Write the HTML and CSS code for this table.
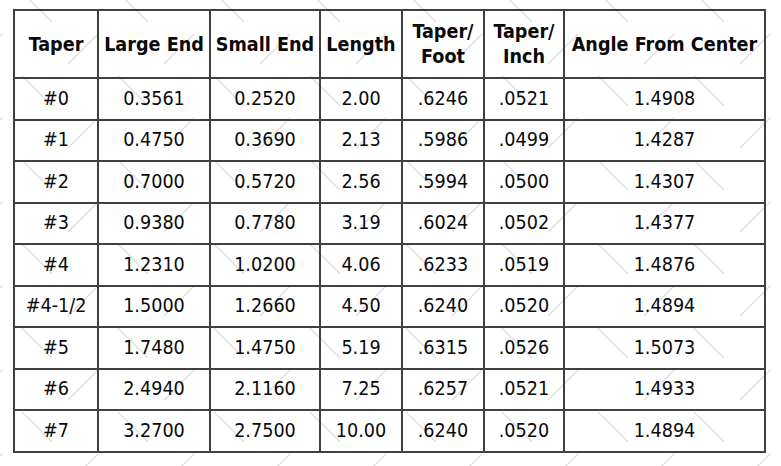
FILE: index.html
```html
<!DOCTYPE html>
<html lang="en">
<head>
<meta charset="utf-8">
<title>Morse Taper Dimensions</title>
<link rel="stylesheet" href="styles.css">
</head>
<body>
<svg class="watermark" width="781" height="466" aria-hidden="true">
  <defs>
    <pattern id="wm" width="96" height="84" patternUnits="userSpaceOnUse" x="20" y="-10">
      <line x1="2" y1="2" x2="32" y2="32" stroke="#e0e0e0" stroke-width="1.4"/>
      <line x1="78" y1="44" x2="48" y2="74" stroke="#e0e0e0" stroke-width="1.4"/>
    </pattern>
  </defs>
  <rect width="781" height="466" fill="url(#wm)"/>
</svg>
<main class="page">
  <table class="taper-table">
    <colgroup>
      <col class="c-taper">
      <col class="c-large">
      <col class="c-small">
      <col class="c-length">
      <col class="c-foot">
      <col class="c-inch">
      <col class="c-angle">
    </colgroup>
    <thead>
      <tr>
        <th>Taper</th>
        <th>Large End</th>
        <th>Small End</th>
        <th>Length</th>
        <th>Taper/<br>Foot</th>
        <th>Taper/<br>Inch</th>
        <th>Angle From Center</th>
      </tr>
    </thead>
    <tbody>
      <tr><td>#0</td><td>0.3561</td><td>0.2520</td><td>2.00</td><td>.6246</td><td>.0521</td><td>1.4908</td></tr>
      <tr><td>#1</td><td>0.4750</td><td>0.3690</td><td>2.13</td><td>.5986</td><td>.0499</td><td>1.4287</td></tr>
      <tr><td>#2</td><td>0.7000</td><td>0.5720</td><td>2.56</td><td>.5994</td><td>.0500</td><td>1.4307</td></tr>
      <tr><td>#3</td><td>0.9380</td><td>0.7780</td><td>3.19</td><td>.6024</td><td>.0502</td><td>1.4377</td></tr>
      <tr><td>#4</td><td>1.2310</td><td>1.0200</td><td>4.06</td><td>.6233</td><td>.0519</td><td>1.4876</td></tr>
      <tr><td>#4-1/2</td><td>1.5000</td><td>1.2660</td><td>4.50</td><td>.6240</td><td>.0520</td><td>1.4894</td></tr>
      <tr><td>#5</td><td>1.7480</td><td>1.4750</td><td>5.19</td><td>.6315</td><td>.0526</td><td>1.5073</td></tr>
      <tr><td>#6</td><td>2.4940</td><td>2.1160</td><td>7.25</td><td>.6257</td><td>.0521</td><td>1.4933</td></tr>
      <tr><td>#7</td><td>3.2700</td><td>2.7500</td><td>10.00</td><td>.6240</td><td>.0520</td><td>1.4894</td></tr>
    </tbody>
  </table>
</main>
</body>
</html>
```
FILE: styles.css
```css
html, body {
  margin: 0;
  padding: 0;
  background: #ffffff;
}

body {
  width: 781px;
  height: 466px;
  overflow: hidden;
  position: relative;
  font-family: "DejaVu Sans Condensed", "DejaVu Sans", sans-serif;
  font-stretch: condensed;
  color: #0a0a0a;
}

.watermark {
  position: absolute;
  left: 0;
  top: 0;
  z-index: 0;
}

.page {
  position: relative;
  z-index: 1;
  padding: 9px 0 0 13px;
}

.taper-table {
  border-collapse: collapse;
  table-layout: fixed;
  width: 751px;
  background: transparent;
}

.c-taper { width: 84px; }
.c-large { width: 112px; }
.c-small { width: 110px; }
.c-length { width: 82px; }
.c-foot { width: 82px; }
.c-inch { width: 80px; }
.c-angle { width: 201px; }

.taper-table th,
.taper-table td {
  border: 2px solid #404040;
  text-align: center;
  padding: 0 2px;
  white-space: nowrap;
}

.taper-table th {
  font-size: 19.6px;
  font-weight: bold;
  line-height: 25px;
  height: 66px;
}

.taper-table td {
  font-size: 19.6px;
  font-weight: normal;
  line-height: 22px;
  height: 39.5px;
}
```
